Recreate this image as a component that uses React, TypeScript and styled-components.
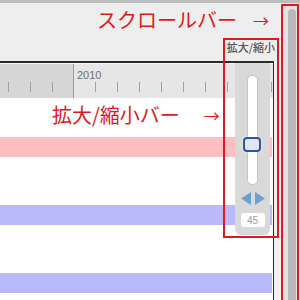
import styled, { createGlobalStyle } from 'styled-components';

const GlobalStyle = createGlobalStyle`
    html, body {
        margin: 0;
        padding: 0;
        background: #eeeeee;
    }
`;

const RED = '#dc1a20';

const Root = styled.div`
    width: 300px;
    height: 300px;

    display: flex;
    flex-direction: column;

    position: relative;
    overflow: hidden;

    background-color: #eeeeee;
    font-family: "Liberation Sans", "Noto Sans CJK JP", sans-serif;
`;

const TopStrip = styled.div`
    height: 3px;
    flex-shrink: 0;
    background-color: #bdbdbd;
`;

const Body = styled.div`
    flex: 1;
    display: flex;
    min-height: 0;
`;

const Content = styled.div`
    width: 281px;
    display: flex;
    flex-direction: column;
    background-color: #f1f1f1;
`;

const Toolbar = styled.div`
    height: 58px;
    flex-shrink: 0;

    display: flex;
    justify-content: flex-end;
    align-items: flex-end;
    padding: 0 6px 8px 0;
    box-sizing: border-box;

    background-color: #eeeeee;
`;

const ZoomLabel = styled.div`
    font-family: "Noto Sans CJK JP", sans-serif;
    font-size: 11px;
    line-height: 12px;
    font-weight: 500;
    color: #555555;
`;

const Timeline = styled.div`
    flex: 1;
    margin-right: 7px;
    position: relative;

    border-top: 2px solid #2a2a2a;
    border-right: 1px solid #2a2a2a;
    background-color: #ffffff;
`;

const Header = styled.div`
    height: 35px;
    display: flex;
    border-top: 1px solid #f7f7f7;
    box-sizing: border-box;
`;

const Segment = styled.div<{ $past?: boolean }>`
    flex: ${({ $past }) => ($past ? '0 0 73px' : '1')};
    position: relative;

    background-color: ${({ $past }) => ($past ? '#d6d6d6' : '#e6e6e6')};
    border-left: ${({ $past }) => ($past ? 'none' : '1px solid #9a9a9a')};
`;

const YearLabel = styled.div`
    padding: 6px 0 0 3px;
    font-size: 11px;
    line-height: 11px;
    color: #707070;
`;

const Ticks = styled.div<{ $offset: number; $top: number }>`
    display: flex;
    gap: 21px;
    padding-left: ${({ $offset }) => $offset}px;
    margin-top: ${({ $top }) => $top}px;
`;

const Tick = styled.div`
    width: 1px;
    height: 10px;
    flex-shrink: 0;
    background-color: #a0a0a0;
`;

const Rows = styled.div`
    display: flex;
    flex-direction: column;
    gap: 48px;
    padding-top: 39px;
`;

const Band = styled.div<{ $color: string }>`
    height: 20px;
    margin-right: 1px;
    background-color: ${({ $color }) => $color};
`;

const ZoomPanel = styled.div`
    width: 35px;
    height: 172px;

    display: flex;
    flex-direction: column;
    align-items: center;

    position: absolute;
    top: 0;
    left: 235px;

    border-radius: 0 0 6px 6px;
    background-color: #d9d9d9;
`;

const Track = styled.div`
    width: 11px;
    height: 110px;
    margin-top: 12px;
    position: relative;
    box-sizing: border-box;

    border: 1px solid #c4c4c4;
    border-radius: 5px;
    background-color: #ffffff;
`;

const Thumb = styled.div`
    width: 18px;
    height: 15px;
    box-sizing: border-box;

    position: absolute;
    top: 61px;
    left: -5px;

    border: 2px solid #2f53a6;
    border-radius: 4px;
    background-color: #dfe6f4;
    box-shadow: 0 0 2px #ffffff;
`;

const Arrows = styled.svg`
    margin-top: 7px;
    display: block;
`;

const ValueBox = styled.div`
    width: 24px;
    height: 14px;
    margin-top: 8px;

    display: flex;
    align-items: center;
    justify-content: center;

    border-radius: 3px;
    background-color: #ffffff;

    font-size: 10px;
    color: #9a9a9a;
`;

const Scroll = styled.div`
    flex: 1;
    padding: 6px 4px 0 6px;
    background-color: #e2e2e2;
    border-left: 1px solid #f5f5f5;
`;

const ScrollThumb = styled.div`
    width: 8px;
    height: 100%;
    border-radius: 4px 4px 0 0;
    background-color: #b9b9b9;
`;

const Callout = styled.div<{ $left: number; $top: number }>`
    position: absolute;
    left: ${({ $left }) => $left}px;
    top: ${({ $top }) => $top}px;

    display: flex;
    align-items: center;

    font-family: "Noto Sans CJK JP", sans-serif;
    font-size: 20px;
    line-height: 20px;
    font-weight: 400;
    color: ${RED};
    white-space: nowrap;
`;

const Arrow = styled.span<{ $gap: number }>`
    margin-left: ${({ $gap }) => $gap}px;
    font-size: 16px;
`;

const Frame = styled.div<{ $left: number; $top: number; $width: number; $height: number }>`
    position: absolute;
    left: ${({ $left }) => $left}px;
    top: ${({ $top }) => $top}px;
    width: ${({ $width }) => $width}px;
    height: ${({ $height }) => $height}px;
    box-sizing: border-box;
    border: 2px solid ${RED};
`;

const range = (n: number) => Array.from({ length: n }, (_, i) => i);

const App: React.FC = () => {
    return (
        <Root>
            <GlobalStyle />
            <TopStrip />
            <Body>
                <Content>
                    <Toolbar>
                        <ZoomLabel>拡大/縮小</ZoomLabel>
                    </Toolbar>
                    <Timeline>
                        <Header>
                            <Segment $past>
                                <Ticks $offset={8} $top={18}>
                                    {range(3).map((i) => <Tick key={i} />)}
                                </Ticks>
                            </Segment>
                            <Segment>
                                <YearLabel>2010</YearLabel>
                                <Ticks $offset={21} $top={1}>
                                    {range(9).map((i) => <Tick key={i} />)}
                                </Ticks>
                            </Segment>
                        </Header>
                        <Rows>
                            <Band $color="#ffbfc0" />
                            <Band $color="#b9b9fd" />
                            <Band $color="#b9b9fd" />
                        </Rows>
                        <ZoomPanel>
                            <Track>
                                <Thumb />
                            </Track>
                            <Arrows width="24" height="13" viewBox="0 0 24 13">
                                <polygon points="0,6.5 10,0 10,13" fill="#6f9fcf" />
                                <polygon points="24,6.5 14,0 14,13" fill="#6f9fcf" />
                            </Arrows>
                            <ValueBox>45</ValueBox>
                        </ZoomPanel>
                    </Timeline>
                </Content>
                <Scroll>
                    <ScrollThumb />
                </Scroll>
            </Body>

            <Callout $left={97} $top={10}>
                スクロールバー<Arrow $gap={16}>→</Arrow>
            </Callout>
            <Callout $left={52} $top={105}>
                拡大/縮小バー<Arrow $gap={24}>→</Arrow>
            </Callout>
            <Frame $left={223} $top={38} $width={56} $height={200} />
            <Frame $left={281} $top={4} $width={18} $height={310} />
        </Root>
    );
};

export default App;
